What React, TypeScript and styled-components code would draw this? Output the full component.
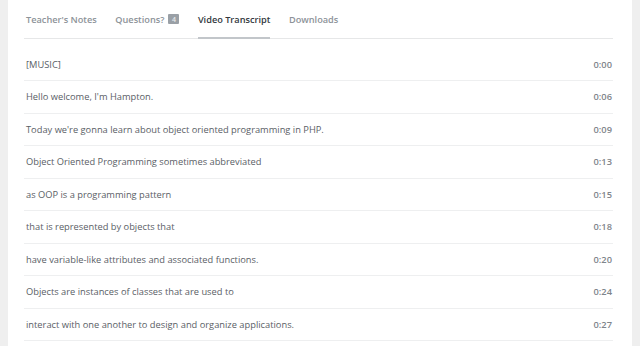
import React from "react";
import styled, { createGlobalStyle } from "styled-components";

const Global = createGlobalStyle`
  html, body { margin: 0; padding: 0; background: #efefef; }
  body { font-family: "Open Sans", "Liberation Sans", sans-serif; }
`;

const Page = styled.div`
  width: 640px;
  height: 346px;
  overflow: hidden;
  display: flex;
  background: #efefef;
`;

const Panel = styled.div`
  margin-left: 8px;
  width: 624px;
  background: #ffffff;
  padding: 0 19px 0 16px;
  box-sizing: border-box;
`;

const Tabs = styled.div`
  display: flex;
  gap: 18.5px;
  height: 38px;
  border-bottom: 1px solid #e6e7e8;
  padding-left: 2px;
`;

const Tab = styled.div<{ $active?: boolean }>`
  display: flex;
  align-items: center;
  gap: 4px;
  font-size: 9.2px;
  font-weight: 600;
  color: ${(p) => (p.$active ? "#33383d" : "#8d9399")};
  border-bottom: 2px solid ${(p) => (p.$active ? "#c2c6ca" : "transparent")};
  margin-bottom: -1px;
  padding-top: 1px;
`;

const Badge = styled.span`
  display: inline-flex;
  align-items: center;
  justify-content: center;
  background: #9aa0a6;
  color: #e8eaec;
  font-size: 7px;
  width: 11px;
  height: 10px;
  border-radius: 1px;
`;

const List = styled.div`
  padding-top: 9.5px;
`;

const Row = styled.div`
  display: flex;
  justify-content: space-between;
  align-items: center;
  box-sizing: border-box;
  height: 32.5px;
  border-bottom: 1px solid #eeeff0;
  padding: 0 1px 0 2px;
  font-size: 9.3px;
  color: #5a6066;
`;

const Time = styled.span`
  font-weight: 600;
  color: #7f858b;
`;

const lines: [string, string][] = [
  ["[MUSIC]", "0:00"],
  ["Hello welcome, I'm Hampton.", "0:06"],
  ["Today we're gonna learn about object oriented programming in PHP.", "0:09"],
  ["Object Oriented Programming sometimes abbreviated", "0:13"],
  ["as OOP is a programming pattern", "0:15"],
  ["that is represented by objects that", "0:18"],
  ["have variable-like attributes and associated functions.", "0:20"],
  ["Objects are instances of classes that are used to", "0:24"],
  ["interact with one another to design and organize applications.", "0:27"],
];

export default function App() {
  return (
    <Page>
      <Global />
      <Panel>
        <Tabs>
          <Tab>Teacher's Notes</Tab>
          <Tab>
            Questions? <Badge>4</Badge>
          </Tab>
          <Tab $active>Video Transcript</Tab>
          <Tab>Downloads</Tab>
        </Tabs>
        <List>
          {lines.map(([t, time]) => (
            <Row key={time}>
              <span>{t}</span>
              <Time>{time}</Time>
            </Row>
          ))}
        </List>
      </Panel>
    </Page>
  );
}
